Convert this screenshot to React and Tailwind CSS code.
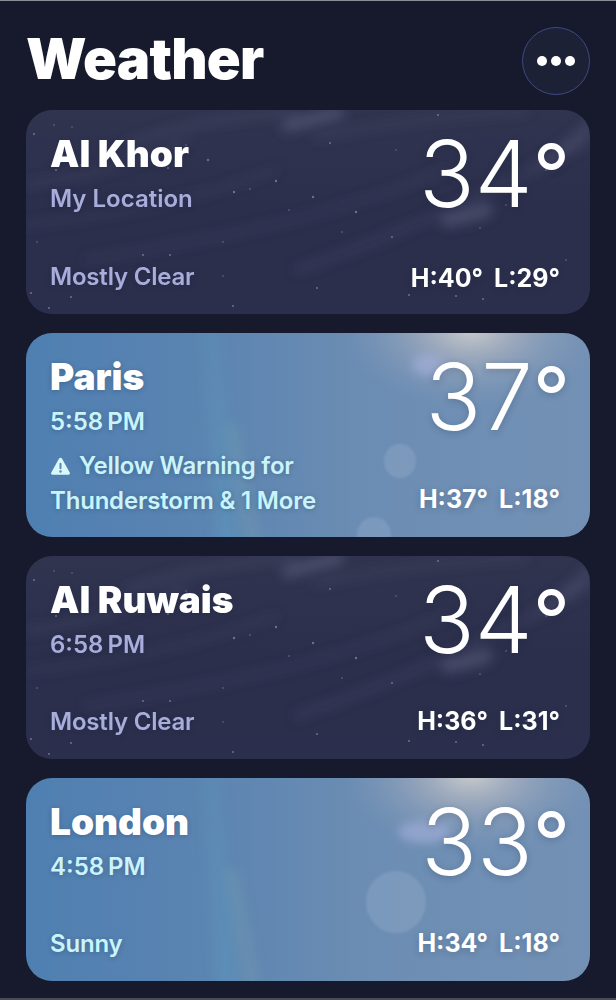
import React from 'react';

const STARS = [
  [8, 24, 1], [28, 15, 0.8], [46, 17, 0.8], [30, 60, 1], [55, 55, 0.8], [160, 35, 0.8], [142, 58, 1], [182, 50, 1.2],
  [208, 82, 1.2], [224, 79, 0.8], [250, 71, 1.2], [287, 87, 1.2], [263, 100, 0.8], [304, 33, 1], [330, 102, 1.2],
  [316, 122, 0.8], [366, 127, 1], [11, 132, 0.8], [197, 132, 0.8], [117, 145, 1], [144, 145, 1], [197, 166, 0.8],
  [5, 183, 1], [45, 187, 1], [23, 198, 1], [207, 196, 1], [291, 178, 1], [383, 185, 1], [430, 186, 1], [457, 189, 1],
  [412, 5, 1], [370, 40, 0.8], [454, 118, 0.8], [480, 95, 0.8], [520, 60, 0.8], [500, 165, 0.8], [540, 150, 0.8],
];

function NightSky() {
  return (
    <svg className="absolute inset-0" width="564" height="204" viewBox="0 0 564 204">
      <defs>
        <filter id="soft" filterUnits="userSpaceOnUse" x="-40" y="-40" width="644" height="284">
          <feGaussianBlur stdDeviation="6" />
        </filter>
        <linearGradient id="night" x1="0" y1="0" x2="0" y2="1">
          <stop offset="0" stopColor="#30344f" />
          <stop offset="0.5" stopColor="#2b2f4c" />
          <stop offset="1" stopColor="#2b2f4d" />
        </linearGradient>
      </defs>
      <rect width="564" height="204" fill="url(#night)" />
      <g filter="url(#soft)" fill="none" stroke="#5e6080" strokeLinecap="round">
        <path d="M100 35C150 15 200 8 270 2" strokeWidth="5" opacity="0.35" />
        <path d="M262 16C275 12 290 8 312 3" strokeWidth="12" opacity="0.6" />
        <path d="M290 28C360 12 430 6 500 2" strokeWidth="5" opacity="0.28" />
        <path d="M0 75C70 65 110 50 160 32" strokeWidth="6" opacity="0.25" />
        <path d="M0 115C90 105 170 90 250 60" strokeWidth="5" opacity="0.22" />
        <path d="M60 150C180 130 300 110 420 60" strokeWidth="6" opacity="0.2" />
        <path d="M270 160C360 130 450 90 564 30" strokeWidth="7" opacity="0.25" />
        <path d="M422 110C435 108 445 105 460 100" strokeWidth="14" opacity="0.55" />
        <path d="M515 55C530 45 550 30 564 15" strokeWidth="10" opacity="0.4" />
      </g>
      {STARS.map(([x, y, r], i) => (
        <circle key={i} cx={x} cy={y} r={r} fill="#9a9db8" opacity="0.6" />
      ))}
    </svg>
  );
}

function DaySky({ blobs, flare }) {
  return (
    <svg className="absolute inset-0" width="564" height="204" viewBox="0 0 564 204">
      <defs>
        <linearGradient id="day" x1="0" y1="0" x2="1" y2="0">
          <stop offset="0" stopColor="#4f7fb1" />
          <stop offset="0.3" stopColor="#5a84b1" />
          <stop offset="0.6" stopColor="#6c8db3" />
          <stop offset="1" stopColor="#7391b5" />
        </linearGradient>
        <radialGradient id="sun" cx="0.5" cy="0.5" r="0.5">
          <stop offset="0" stopColor="#cfcfcd" stopOpacity="0.95" />
          <stop offset="0.4" stopColor="#aeb3bf" stopOpacity="0.6" />
          <stop offset="1" stopColor="#7f98b8" stopOpacity="0" />
        </radialGradient>
        <linearGradient id="bowFade" x1="0" y1="0" x2="0" y2="1">
          <stop offset="0" stopColor="#5d9abb" stopOpacity="0.18" />
          <stop offset="1" stopColor="#5a96bf" stopOpacity="0.55" />
        </linearGradient>
        <filter id="haze" filterUnits="userSpaceOnUse" x="100" y="-40" width="220" height="284">
          <feGaussianBlur stdDeviation="6" />
        </filter>
        <filter id="flareBlur" filterUnits="userSpaceOnUse" x="340" y="0" width="120" height="90">
          <feGaussianBlur stdDeviation="5" />
        </filter>
        <filter id="edge" filterUnits="userSpaceOnUse" x="300" y="70" width="130" height="170">
          <feGaussianBlur stdDeviation="1" />
        </filter>
      </defs>
      <rect width="564" height="204" fill="url(#day)" />
      <path d="M176 -10L192 -10L212 214L192 214Z" fill="url(#bowFade)" filter="url(#haze)" />
      <path d="M198 90L212 90L236 214L218 214Z" fill="#86aeb0" opacity="0.22" filter="url(#haze)" />
      <ellipse cx="445" cy="-4" rx="130" ry="80" fill="url(#sun)" />
      <ellipse cx={flare[0]} cy={flare[1]} rx={flare[2]} ry="11" fill="#a6b0dc" opacity="0.6" filter="url(#flareBlur)" />
      {blobs.map(([x, y, rx, ry], i) => (
        <ellipse key={i} cx={x} cy={y} rx={rx} ry={ry} fill="#a9bcd6" opacity="0.26" filter="url(#edge)" />
      ))}
    </svg>
  );
}

function WarningIcon() {
  return (
    <svg width="21" height="20" viewBox="0 0 18 18" className="mr-[8px] shrink-0">
      <path d="M9 1.500c.6 0 1 .3 1.300.8l7 12.600c.5.9 0 1.900-1.100 1.900H1.800C.7 16.800.2 15.800.7 14.900l7-12.600c.3-.5.7-.8 1.300-.8z" fill="#d8f8fb" />
      <rect x="8.100" y="6" width="1.800" height="6" rx="0.900" fill="#5c85b0" />
      <circle cx="9" cy="14" r="1.100" fill="#5c85b0" />
    </svg>
  );
}

function CityCard({ city, sub, temp, hi, lo, condition, warning, night, blobs = [], flare, height = 'h-[204px]', rowPad = 'pb-[23px]' }) {
  const subColor = night ? 'text-[#a8addb]' : 'text-[#c9f4fb]';
  return (
    <div className={`relative ${height} overflow-hidden rounded-[26px] flex justify-between pl-[24px] pr-[20px]`}>
      {night ? <NightSky /> : <DaySky blobs={blobs} flare={flare} />}

      <div className={`relative flex flex-col justify-between pt-[20px] ${warning ? 'pb-[19px]' : 'pb-[22px]'} [text-shadow:0_1px_5px_rgba(20,30,60,0.25)]`}>
        <div>
          <div className="text-[37px] leading-[48px] font-black text-white">{city}</div>
          <div className={`text-[24px] leading-[30px] mt-[6px] font-semibold ${subColor}`}>{sub}</div>
        </div>
        {warning ? (
          <div className={`text-[24px] leading-[35px] font-semibold tracking-[-0.2px] ${subColor}`}>
            <div className="flex items-center"><WarningIcon />{warning[0]}</div>
            <div>{warning[1]}</div>
          </div>
        ) : (
          <div className={`text-[24px] leading-[30px] font-semibold tracking-[-0.2px] ${subColor}`}>{condition}</div>
        )}
      </div>

      <div className={`relative flex flex-col items-end justify-between pt-[18px] ${rowPad} [text-shadow:0_2px_7px_rgba(20,30,60,0.22)]`}>
        <div className="flex items-start text-white">
          <span className="text-[92px] leading-[92px] font-light">{temp}</span>
          <span className="text-[82px] leading-[82px] font-normal mt-[5px]">°</span>
        </div>
        <div className="flex gap-[11px] text-[25px] leading-[30px] font-bold text-white mr-[10px]">
          <span>H:{hi}°</span>
          <span>L:{lo}°</span>
        </div>
      </div>
    </div>
  );
}

export default function App() {
  return (
    <div className="relative w-[616px] h-[1000px] overflow-hidden bg-[#161a2c] border-t border-[#8a8d96] font-['Inter',sans-serif]">
      <div className="flex items-center justify-between px-[26px] h-[109px] pb-[2px]">
        <h1 className="text-[56px] leading-[60px] font-black text-white tracking-[-0.8px] mt-[9px]">Weather</h1>
        <button className="w-[68px] h-[68px] mt-[13px] rounded-full border border-[#3d4a80] bg-[#1d2136] flex items-center justify-center gap-[4px]">
          <span className="w-[10px] h-[10px] rounded-full bg-white" />
          <span className="w-[10px] h-[10px] rounded-full bg-white" />
          <span className="w-[10px] h-[10px] rounded-full bg-white" />
        </button>
      </div>

      <div className="flex flex-col gap-[19px] px-[26px]">
        <CityCard night rowPad="pb-[21px]" city="Al Khor" sub="My Location" temp="34" hi="40" lo="29" condition="Mostly Clear" />
        <CityCard city="Paris" sub={'5:58\u2009PM'} temp="37" hi="37" lo="18" warning={['Yellow Warning for', 'Thunderstorm & 1 More']} flare={[402, 32, 16]} blobs={[[374, 128, 16, 17], [348, 202, 17, 18]]} />
        <CityCard night height="h-[203px]" city="Al Ruwais" sub={'6:58\u2009PM'} temp="34" hi="36" lo="31" condition="Mostly Clear" />
        <CityCard city="London" sub={'4:58\u2009PM'} temp="33" hi="34" lo="18" condition="Sunny" height="h-[203px]" flare={[398, 54, 26]} blobs={[[370, 124, 30, 31]]} />
      </div>

      <div className="absolute inset-x-0 bottom-0 h-[2px] bg-[#4a4c58]" />
    </div>
  );
}
